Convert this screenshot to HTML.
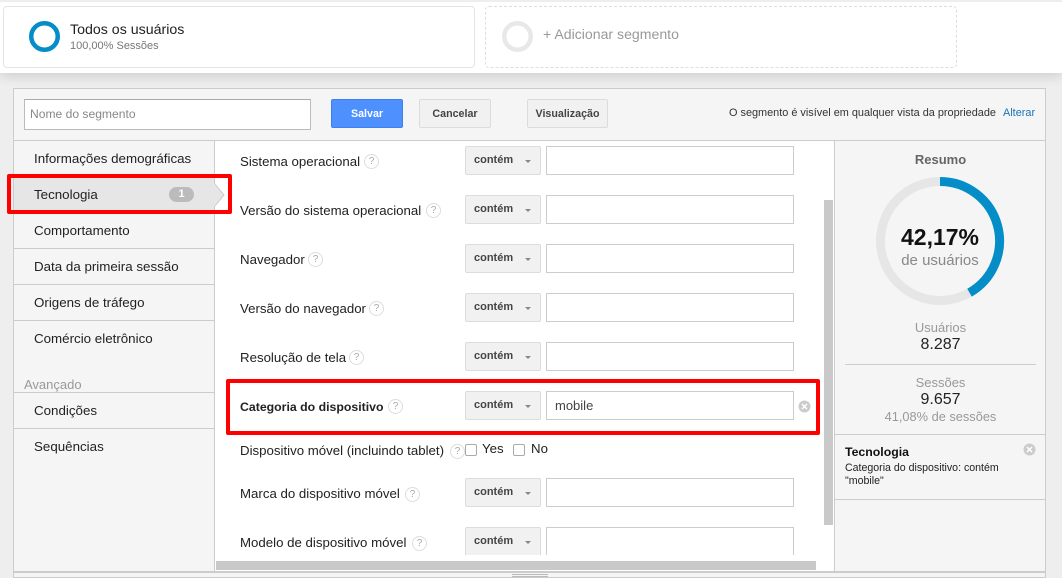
<!DOCTYPE html>
<html><head><meta charset="utf-8"><style>
html,body{margin:0;padding:0}
body{width:1062px;height:578px;position:relative;overflow:hidden;background:#eee;font-family:"Liberation Sans",sans-serif;color:#222;font-size:13px}
div,span.a{position:absolute;box-sizing:border-box;white-space:nowrap}
.lbl{left:240px;line-height:16px;font-size:13.25px;color:#222}
.q{width:15px;height:15px;border:1px solid #ddd;border-radius:50%;color:#aaa;font-size:10px;line-height:13px;text-align:center}
.sel{left:465px;width:76px;height:29px;background:#f1f1f1;border:1px solid #dcdcdc;border-radius:2px;font-size:11px;font-weight:bold;color:#444;line-height:26px;padding-left:8px}
.sel:after{content:"";position:absolute;left:59px;top:13px;border:3.5px solid transparent;border-top-color:#888;border-bottom:0}
.inp{left:546px;width:248px;height:29px;background:#fff;border:1px solid #ccc}
.nav{left:14px;width:200px;height:36px;border-bottom:1px solid #ccc;padding-left:20px;line-height:35px;font-size:13.35px;color:#222}
.btn{top:99px;height:29px;background:#f1f1f1;border:1px solid #dcdcdc;border-radius:2px;color:#444;font-weight:bold;font-size:10.7px;text-align:center;line-height:28px}
</style></head><body>
<div style="left:0;top:0;width:1062px;height:73px;background:#fff;border-top:2px solid #eee;box-shadow:0 2px 12px rgba(0,0,0,.16)"></div>
<div style="left:3px;top:6px;width:472px;height:62px;border:1px solid #e4e4e4;border-radius:4px;background:#fff"></div>
<div style="left:485px;top:6px;width:472px;height:62px;border:1px dashed #ddd;border-radius:4px;background:#fff"></div>
<svg style="position:absolute;left:29px;top:21px" width="32" height="32"><circle cx="15.5" cy="15.5" r="13.25" fill="none" stroke="#058dc7" stroke-width="4.5"/></svg>
<svg style="position:absolute;left:502px;top:21px" width="32" height="32"><circle cx="15.5" cy="15.5" r="13.25" fill="none" stroke="#e8e8e8" stroke-width="4.5"/></svg>
<div style="left:70px;top:22px;font-size:14.2px;line-height:17px;color:#222">Todos os usuários</div>
<div style="left:70px;top:39px;font-size:11px;line-height:14px;color:#777">100,00% Sessões</div>
<div style="left:543px;top:26px;font-size:14.1px;line-height:17px;color:#999">+ Adicionar segmento</div>

<div style="left:13px;top:88px;width:1033px;height:490px;background:#f5f5f5;border:1px solid #ccc"></div>
<div style="left:24px;top:99px;width:287px;height:31px;background:#fff;border:1px solid #bbb;border-top-color:#aaa;padding-left:5px;line-height:29px;color:#888;font-size:12.1px">Nome do segmento</div>
<div style="left:331px;top:99px;width:72px;height:29px;background:#4d90fe;border:1px solid #3d80ee;border-radius:2px;color:#fff;font-weight:bold;font-size:10.7px;text-align:center;line-height:28px">Salvar</div>
<div class="btn" style="left:419px;width:72px">Cancelar</div>
<div class="btn" style="left:527px;width:81px">Visualização</div>
<div style="left:729px;top:106px;font-size:10.9px;line-height:14px;color:#333">O segmento é visível em qualquer vista da propriedade</div>
<div style="left:1003px;top:106px;font-size:10.9px;line-height:14px;color:#1a73b5">Alterar</div>
<div style="left:14px;top:140px;width:1031px;height:1px;background:#ccc"></div>

<div style="left:214px;top:141px;width:621px;height:430px;background:#fff;border-left:1px solid #ccc;border-right:1px solid #ccc"></div>

<div class="nav" style="top:141px">Informações demográficas</div>
<div class="nav" style="top:177px;background:#e6e6e6">Tecnologia</div>
<div style="left:169px;top:187px;width:25px;height:15px;border-radius:8px;background:#bbb;color:#fff;font-size:11px;font-weight:bold;line-height:15px;text-align:center">1</div>
<svg style="position:absolute;left:214px;top:183px" width="11" height="24"><path d="M0 0L10 12L0 24Z" fill="#e6e6e6" stroke="#ccc"/><path d="M0 1V23" stroke="#e6e6e6" stroke-width="2"/></svg>
<div class="nav" style="top:213px">Comportamento</div>
<div class="nav" style="top:249px">Data da primeira sessão</div>
<div class="nav" style="top:285px">Origens de tráfego</div>
<div class="nav" style="top:321px;border-bottom:0">Comércio eletrônico</div>
<div style="left:24px;top:377px;font-size:13px;line-height:16px;color:#999">Avançado</div>
<div style="left:14px;top:392px;width:200px;height:1px;background:#ccc"></div>
<div class="nav" style="top:393px">Condições</div>
<div class="nav" style="top:429px;border-bottom:0">Sequências</div>

<div style="left:215px;top:141px;width:608px;height:414px;overflow:hidden">
<div class="lbl" style="left:25px;top:13px">Sistema operacional</div><div class="q" style="left:149px;top:13px">?</div>
<div class="sel" style="left:250px;top:5px">contém</div><div class="inp" style="left:331px;top:5px"></div>
<div class="lbl" style="left:25px;top:62px">Versão do sistema operacional</div><div class="q" style="left:211px;top:62px">?</div>
<div class="sel" style="left:250px;top:54px">contém</div><div class="inp" style="left:331px;top:54px"></div>
<div class="lbl" style="left:25px;top:111px">Navegador</div><div class="q" style="left:93px;top:111px">?</div>
<div class="sel" style="left:250px;top:103px">contém</div><div class="inp" style="left:331px;top:103px"></div>
<div class="lbl" style="left:25px;top:160px">Versão do navegador</div><div class="q" style="left:154px;top:160px">?</div>
<div class="sel" style="left:250px;top:152px">contém</div><div class="inp" style="left:331px;top:152px"></div>
<div class="lbl" style="left:25px;top:209px">Resolução de tela</div><div class="q" style="left:134px;top:209px">?</div>
<div class="sel" style="left:250px;top:201px">contém</div><div class="inp" style="left:331px;top:201px"></div>
<div class="lbl" style="left:25px;top:258px;font-weight:bold;font-size:12.3px">Categoria do dispositivo</div><div class="q" style="left:173px;top:258px">?</div>
<div class="sel" style="left:250px;top:250px">contém</div><div class="inp" style="left:331px;top:250px;padding-left:8px;line-height:28px;font-size:13px;color:#444">mobile</div>
<svg style="position:absolute;left:583px;top:259px" width="13" height="13"><circle cx="6.5" cy="6.5" r="6" fill="#ccc"/><path d="M4 4L9 9M9 4L4 9" stroke="#fff" stroke-width="1.5"/></svg>
<div class="lbl" style="left:25px;top:302px">Dispositivo móvel (incluindo tablet)</div><div class="q" style="left:235px;top:303px">?</div>
<div style="left:250px;top:303px;width:12px;height:12px;border:1px solid #aaa;border-radius:2px;background:#fff"></div>
<div class="lbl" style="left:267px;top:300px">Yes</div>
<div style="left:298px;top:303px;width:12px;height:12px;border:1px solid #aaa;border-radius:2px;background:#fff"></div>
<div class="lbl" style="left:316px;top:300px">No</div>
<div class="lbl" style="left:25px;top:345px">Marca do dispositivo móvel</div><div class="q" style="left:190px;top:346px">?</div>
<div class="sel" style="left:250px;top:337px">contém</div><div class="inp" style="left:331px;top:337px"></div>
<div class="lbl" style="left:25px;top:394px">Modelo de dispositivo móvel</div><div class="q" style="left:197px;top:395px">?</div>
<div class="sel" style="left:250px;top:386px">contém</div><div class="inp" style="left:331px;top:386px"></div>
</div>

<div style="left:824px;top:200px;width:9px;height:325px;background:#c9c9c9"></div>
<div style="left:216px;top:561px;width:600px;height:9px;background:#c9c9c9"></div>
<div style="left:14px;top:571px;width:1031px;height:2px;background:#ccc"></div>
<div style="left:512px;top:574px;width:36px;height:1px;background:#bbb"></div>
<div style="left:512px;top:576px;width:36px;height:1px;background:#bbb"></div>

<div style="top:152px;font-size:13px;line-height:16px;font-weight:bold;color:#666;left:835px;width:211px;text-align:center">Resumo</div>
<svg style="position:absolute;left:870px;top:170px" width="140" height="140"><circle cx="70" cy="71" r="59.5" fill="none" stroke="#e6e6e6" stroke-width="9"/><path d="M70 11.5A59.5 59.5 0 0 1 99.5 122.7" fill="none" stroke="#058dc7" stroke-width="9"/></svg>
<div style="left:870px;top:223px;width:140px;text-align:center;font-size:23px;line-height:28px;font-weight:bold;color:#111">42,17%</div>
<div style="left:870px;top:252px;width:140px;text-align:center;font-size:15px;line-height:17px;color:#888">de usuários</div>
<div style="left:835px;width:211px;text-align:center;top:320px;font-size:13px;line-height:15px;color:#999">Usuários</div>
<div style="left:835px;width:211px;text-align:center;top:336px;font-size:16px;line-height:18px;color:#222">8.287</div>
<div style="left:845px;top:364px;width:191px;height:1px;background:#ccc"></div>
<div style="left:835px;width:211px;text-align:center;top:375px;font-size:13px;line-height:15px;color:#999">Sessões</div>
<div style="left:835px;width:211px;text-align:center;top:391px;font-size:16px;line-height:18px;color:#222">9.657</div>
<div style="left:835px;width:211px;text-align:center;top:409px;font-size:12.8px;line-height:15px;color:#999">41,08% de sessões</div>
<div style="left:835px;top:434px;width:210px;height:1px;background:#ccc"></div>
<div style="left:845px;top:445px;font-size:12.3px;line-height:15px;font-weight:bold;color:#111">Tecnologia</div>
<div style="left:845px;top:462px;font-size:10.6px;line-height:13px;color:#222">Categoria do dispositivo: contém<br>"mobile"</div>
<svg style="position:absolute;left:1023px;top:443px" width="13" height="13"><circle cx="6.5" cy="6.5" r="6" fill="#ccc"/><path d="M4 4L9 9M9 4L4 9" stroke="#fff" stroke-width="1.5"/></svg>
<div style="left:835px;top:499px;width:210px;height:1px;background:#ccc"></div>

<div style="left:7px;top:174px;width:225px;height:40px;border:4px solid #f00;border-radius:2px"></div>
<div style="left:226px;top:379px;width:594px;height:56px;border:4px solid #f00;border-radius:2px"></div>
</body></html>
